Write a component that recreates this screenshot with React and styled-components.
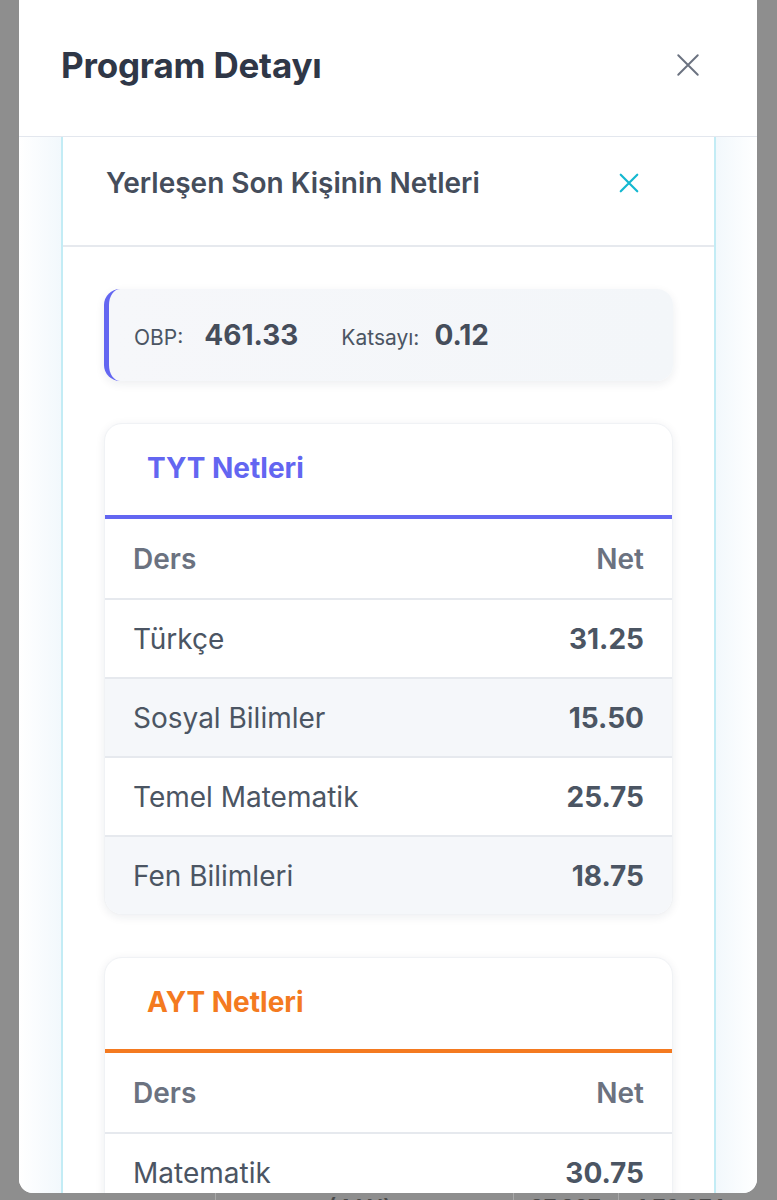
import React from "react";
import styled, { createGlobalStyle } from "styled-components";

const GlobalStyle = createGlobalStyle`
  html, body { margin: 0; padding: 0; }
  body {
    background: #8e8e8e;
    font-family: Inter, "Noto Sans", "Liberation Sans", sans-serif;
    -webkit-font-smoothing: antialiased;
  }
`;

const Page = styled.div`
  height: 1200px;
  overflow: hidden;
  padding: 0 20px 0 19px;
  box-sizing: border-box;
  display: flex;
  flex-direction: column;
`;

const Modal = styled.div`
  height: 1193px;
  flex: none;
  background: #fff;
  border-radius: 0 0 14px 14px;
  overflow: hidden;
  display: flex;
  flex-direction: column;
`;

const ModalHeader = styled.header`
  height: 137px;
  flex: none;
  box-sizing: border-box;
  border-bottom: 1px solid #e3e7ee;
  padding: 0 56px 6px 42px;
  display: flex;
  align-items: center;
  justify-content: space-between;
`;

const ModalTitle = styled.h1`
  margin: 0;
  font-size: 35px;
  font-weight: 700;
  color: #2f3747;
  letter-spacing: -0.2px;
`;

const IconButton = styled.button`
  border: 0;
  background: none;
  padding: 0;
  display: flex;
  align-items: center;
  justify-content: center;
  color: ${(p) => p.$color};
  cursor: pointer;
`;

const ModalBody = styled.div`
  flex: 1;
  min-height: 0;
  padding: 0 41px 0 42px;
  background: linear-gradient(
    90deg,
    #ffffff 0,
    #f2f8fc 42px,
    #f2f8fc calc(100% - 41px),
    #ffffff 100%
  );
  display: flex;
`;

const Panel = styled.section`
  flex: 1;
  background: #fff;
  border-left: 2px solid #c3ecf5;
  border-right: 2px solid #c3ecf5;
  display: flex;
  flex-direction: column;
`;

const PanelHeader = styled.div`
  height: 110px;
  flex: none;
  box-sizing: border-box;
  border-bottom: 2px solid #e6e9ee;
  padding: 0 74px 17px 43px;
  display: flex;
  align-items: center;
  justify-content: space-between;
`;

const PanelTitle = styled.h2`
  margin: 0;
  font-size: 28px;
  font-weight: 600;
  color: #454d5b;
`;

const PanelContent = styled.div`
  padding: 42px 41px;
  display: flex;
  flex-direction: column;
  gap: 42px;
`;

const ScoreCard = styled.div`
  height: 92px;
  box-sizing: border-box;
  border-radius: 16px;
  border-left: 5px solid #6366f1;
  background: linear-gradient(90deg, #f6f7fa, #f3f6f9);
  box-shadow: 0 3px 10px rgba(30, 41, 59, 0.08);
  padding: 0 25px;
  display: flex;
  align-items: center;
  gap: 43px;
`;

const ScoreItem = styled.div`
  display: flex;
  align-items: baseline;
  gap: ${(p) => p.$gap}px;
`;

const ScoreLabel = styled.span`
  font-size: 21px;
  color: #4b5563;
`;

const ScoreValue = styled.span`
  font-size: 28px;
  font-weight: 700;
  color: #454d5b;
`;

const NetCard = styled.div`
  border-radius: 18px;
  background: #fff;
  box-shadow: 0 2px 10px rgba(30, 41, 59, 0.08);
  border: 1px solid #f0f2f5;
  overflow: hidden;
`;

const NetCardHeader = styled.div`
  height: 95px;
  box-sizing: border-box;
  padding: 0 42px 4px;
  display: flex;
  align-items: center;
  border-bottom: 4px solid ${(p) => p.$accent};
`;

const NetCardTitle = styled.h3`
  margin: 0;
  font-size: 28px;
  font-weight: 700;
  color: ${(p) => p.$accent};
`;

const Row = styled.div`
  height: 79px;
  box-sizing: border-box;
  padding: 0 28px;
  display: flex;
  align-items: center;
  justify-content: space-between;
  background: ${(p) => (p.$alt ? "#f5f7fa" : "#fff")};
  & + & {
    border-top: 2px solid #e6e9ee;
  }
`;

const HeadCell = styled.span`
  font-size: 28px;
  font-weight: 600;
  color: #6b7280;
`;

const Cell = styled.span`
  font-size: 28px;
  font-weight: ${(p) => (p.$bold ? 700 : 400)};
  color: #4b5563;
`;

const BehindRow = styled.div`
  height: 7px;
  flex: none;
  overflow: hidden;
  display: grid;
  grid-template-columns: 196px 298px 105px 1fr;
  color: #4a4a4a;
  font-size: 22px;
  font-weight: 600;
  line-height: 1;
`;

const BehindCell = styled.div`
  border-left: ${(p) => (p.$line ? "1px solid #a9a9a9" : "none")};
  padding: 3px 0 0 ${(p) => p.$pad}px;
`;

const CloseIcon = ({ size, stroke }) => (
  <svg width={size} height={size} viewBox="0 0 24 24" fill="none">
    <path
      d="M3 3 L21 21 M21 3 L3 21"
      stroke="currentColor"
      strokeWidth={stroke}
      strokeLinecap="round"
    />
  </svg>
);

const tyt = [
  ["Türkçe", "31.25"],
  ["Sosyal Bilimler", "15.50"],
  ["Temel Matematik", "25.75"],
  ["Fen Bilimleri", "18.75"],
];

const ayt = [
  ["Matematik", "30.75"],
  ["Fizik", "12.50"],
];

function NetTable({ title, accent, rows }) {
  return (
    <NetCard>
      <NetCardHeader $accent={accent}>
        <NetCardTitle $accent={accent}>{title}</NetCardTitle>
      </NetCardHeader>
      <Row>
        <HeadCell>Ders</HeadCell>
        <HeadCell>Net</HeadCell>
      </Row>
      {rows.map(([name, val], i) => (
        <Row key={name} $alt={i % 2 === 1}>
          <Cell>{name}</Cell>
          <Cell $bold>{val}</Cell>
        </Row>
      ))}
    </NetCard>
  );
}

export default function App() {
  return (
    <>
      <GlobalStyle />
      <Page>
        <Modal>
          <ModalHeader>
            <ModalTitle>Program Detayı</ModalTitle>
            <IconButton $color="#6b7280" aria-label="Kapat">
              <CloseIcon size={26} stroke={1.8} />
            </IconButton>
          </ModalHeader>
          <ModalBody>
            <Panel>
              <PanelHeader>
                <PanelTitle>Yerleşen Son Kişinin Netleri</PanelTitle>
                <IconButton $color="#14b8d0" aria-label="Kapat">
                  <CloseIcon size={22} stroke={2.4} />
                </IconButton>
              </PanelHeader>
              <PanelContent>
                <ScoreCard>
                  <ScoreItem $gap={21}>
                    <ScoreLabel>OBP:</ScoreLabel>
                    <ScoreValue>461.33</ScoreValue>
                  </ScoreItem>
                  <ScoreItem $gap={15}>
                    <ScoreLabel>Katsayı:</ScoreLabel>
                    <ScoreValue>0.12</ScoreValue>
                  </ScoreItem>
                </ScoreCard>
                <NetTable title="TYT Netleri" accent="#6366f1" rows={tyt} />
                <NetTable title="AYT Netleri" accent="#f47a20" rows={ayt} />
              </PanelContent>
            </Panel>
          </ModalBody>
        </Modal>
        <BehindRow>
          <BehindCell $pad={0} />
          <BehindCell $line $pad={112}>(4 Yıl)</BehindCell>
          <BehindCell $line $pad={16}>27.297</BehindCell>
          <BehindCell $line $pad={18}>1.76.974</BehindCell>
        </BehindRow>
      </Page>
    </>
  );
}
